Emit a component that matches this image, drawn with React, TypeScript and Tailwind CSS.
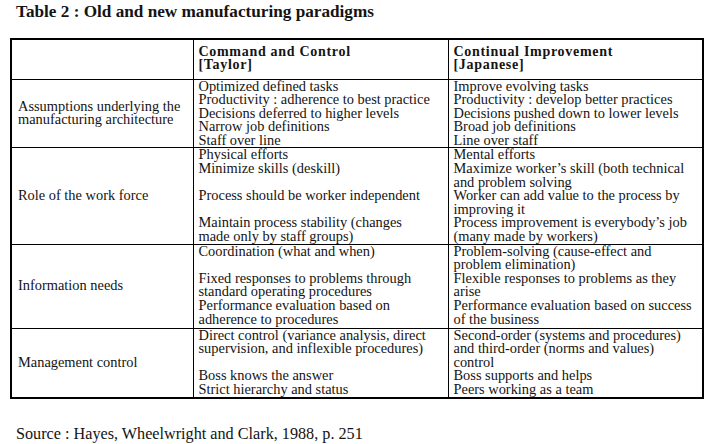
const rows: { label: string[]; left: string[]; right: string[]; h: string }[] = [
  {
    label: ["Assumptions underlying the", "manufacturing architecture"],
    left: [
      "Optimized defined tasks",
      "Productivity : adherence to best practice",
      "Decisions deferred to higher levels",
      "Narrow job definitions",
      "Staff over line",
    ],
    right: [
      "Improve evolving tasks",
      "Productivity : develop better practices",
      "Decisions pushed down to lower levels",
      "Broad job definitions",
      "Line over staff",
    ],
    h: "h-[67px]",
  },
  {
    label: ["Role of the work force"],
    left: [
      "Physical efforts",
      "Minimize skills (deskill)",
      "",
      "Process should be worker independent",
      "",
      "Maintain process stability (changes",
      "made only by staff groups)",
    ],
    right: [
      "Mental efforts",
      "Maximize worker\u2019s skill (both technical",
      "and problem solving",
      "Worker can add value to the process by",
      "improving it",
      "Process improvement is everybody\u2019s job",
      "(many made by workers)",
    ],
    h: "h-[96px]",
  },
  {
    label: ["Information needs"],
    left: [
      "Coordination (what and when)",
      "",
      "Fixed responses to problems through",
      "standard operating procedures",
      "Performance evaluation based on",
      "adherence to procedures",
    ],
    right: [
      "Problem-solving (cause-effect and",
      "problem elimination)",
      "Flexible responses to problems as they",
      "arise",
      "Performance evaluation based on success",
      "of the business",
    ],
    h: "h-[84px]",
  },
  {
    label: ["Management control"],
    left: [
      "Direct control (variance analysis, direct",
      "supervision, and inflexible procedures)",
      "",
      "Boss knows the answer",
      "Strict hierarchy and status",
    ],
    right: [
      "Second-order (systems and procedures)",
      "and third-order (norms and values)",
      "control",
      "Boss supports and helps",
      "Peers working as a team",
    ],
    h: "h-[66px]",
  },
];

function Lines({ lines }: { lines: string[] }) {
  return (
    <>
      {lines.map((l, i) => (
        <div key={i} className="h-[13.6px] whitespace-nowrap leading-[13.6px]">
          {l}
        </div>
      ))}
    </>
  );
}

export default function App() {
  return (
    <div
      className="relative h-[444px] w-[709px] overflow-hidden bg-white text-[#141414]"
      style={{ fontFamily: '"Liberation Serif", serif' }}
    >
      <h1 className="pl-[16px] pt-[2px] text-[17.2px] font-bold leading-[20px]">
        Table 2 : Old and new manufacturing paradigms
      </h1>

      <table className="ml-[10px] mt-[16px] w-[692px] table-fixed border-collapse border-2 border-black text-[14.4px]">
        <colgroup>
          <col className="w-[182px]" />
          <col className="w-[255px]" />
          <col className="w-[255px]" />
        </colgroup>
        <thead>
          <tr className="h-[40px]">
            <th className="border border-black" />
            <th className="border border-black px-[5px] pb-[7px] text-left align-bottom text-[14px] font-bold leading-[13.5px] tracking-[0.7px]">
              <div>Command and Control</div>
              <div>[Taylor]</div>
            </th>
            <th className="border border-black px-[5px] pb-[7px] text-left align-bottom text-[14px] font-bold leading-[13.5px] tracking-[0.7px]">
              <div>Continual Improvement</div>
              <div>[Japanese]</div>
            </th>
          </tr>
        </thead>
        <tbody>
          {rows.map((r) => (
            <tr key={r.label[0]} className={r.h}>
              <td className="border border-black px-[6px] align-middle">
                <Lines lines={r.label} />
              </td>
              <td className="border border-black px-[5px] pt-0 align-top">
                <Lines lines={r.left} />
              </td>
              <td className="border border-black px-[5px] pt-0 align-top">
                <Lines lines={r.right} />
              </td>
            </tr>
          ))}
        </tbody>
      </table>

      <p className="mt-[26px] pl-[16px] text-[16.2px] leading-[18px]">
        Source : Hayes, Wheelwright and Clark, 1988, p. 251
      </p>
    </div>
  );
}
